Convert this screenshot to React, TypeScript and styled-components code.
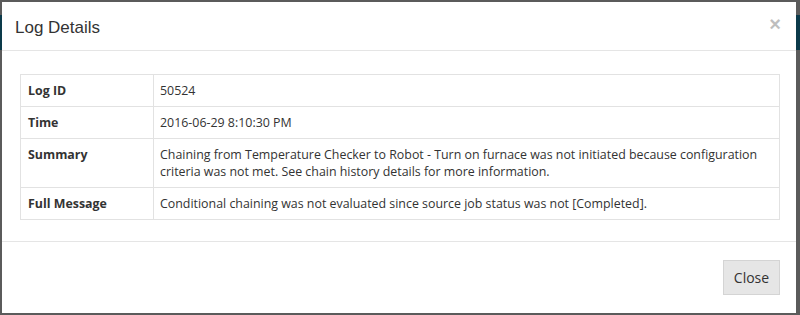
import { createGlobalStyle, styled } from 'styled-components';

const GlobalStyle = createGlobalStyle`
  html, body {
    margin: 0;
    padding: 0;
    background: #5b5b5b;
  }
  * {
    box-sizing: border-box;
  }
`;

interface LogRow {
  label: string;
  value: string;
}

const rows: LogRow[] = [
  { label: 'Log ID', value: '50524' },
  { label: 'Time', value: '2016-06-29 8:10:30 PM' },
  {
    label: 'Summary',
    value:
      'Chaining from Temperature Checker to Robot - Turn on furnace was not initiated because configuration criteria was not met. See chain history details for more information.',
  },
  {
    label: 'Full Message',
    value: 'Conditional chaining was not evaluated since source job status was not [Completed].',
  },
];

const App = () => {
  return (
    <>
      <GlobalStyle />
      <Page>
        <PageHeader />
        <Modal>
          <ModalHeader>
            <ModalTitle>Log Details</ModalTitle>
            <CloseIcon aria-label='close'>×</CloseIcon>
          </ModalHeader>
          <ModalBody>
            <DetailTable>
              <tbody>
                {rows.map((row) => (
                  <tr key={row.label}>
                    <LabelCell>{row.label}</LabelCell>
                    <ValueCell>{row.value}</ValueCell>
                  </tr>
                ))}
              </tbody>
            </DetailTable>
          </ModalBody>
          <ModalFooter>
            <Button type='button'>Close</Button>
          </ModalFooter>
        </Modal>
      </Page>
    </>
  );
};

export default App;

const Page = styled.div`
  position: relative;
  width: 800px;
  height: 315px;
  padding-top: 15px;
  overflow: hidden;
`;

const PageHeader = styled.div`
  height: 35px;
  background: #0c3a4a;
`;

const Modal = styled.div`
  position: absolute;
  top: 2px;
  left: 2px;
  width: 794px;
  height: 311px;
  background: #fff;
  display: flex;
  flex-direction: column;
`;

const ModalHeader = styled.div`
  display: flex;
  align-items: center;
  justify-content: space-between;
  height: 49px;
  padding: 0 15px 0 13px;
  border-bottom: 1px solid #e5e5e5;
`;

const ModalTitle = styled.h4`
  margin: 0;
  font-family: 'Liberation Sans', Arial, sans-serif;
  font-size: 17px;
  font-weight: normal;
  color: #333;
  padding-top: 3px;
`;

const CloseIcon = styled.span`
  font-family: 'Liberation Sans', Arial, sans-serif;
  font-size: 20px;
  font-weight: bold;
  line-height: 1;
  color: #000;
  opacity: 0.25;
  margin-top: -4px;
`;

const ModalBody = styled.div`
  flex: 1;
  padding: 23px 16px 0 18px;
`;

const DetailTable = styled.table`
  width: 100%;
  border-collapse: collapse;
  border: 1px solid #e2e2e2;
  font-family: 'Open Sans', sans-serif;
  font-size: 12.4px;
  line-height: 17px;
  color: #333;
`;

const LabelCell = styled.td`
  width: 133px;
  padding: 7px 7px;
  border: 1px solid #e2e2e2;
  font-weight: bold;
  vertical-align: top;
`;

const ValueCell = styled.td`
  padding: 7px 6px;
  border: 1px solid #e2e2e2;
  vertical-align: top;
`;

const ModalFooter = styled.div`
  display: flex;
  justify-content: flex-end;
  height: 72px;
  padding: 18px 16px 0 0;
  border-top: 1px solid #e5e5e5;
`;

const Button = styled.button`
  width: 57px;
  height: 35px;
  padding: 0;
  background: #e6e6e6;
  border: 1px solid #d4d4d4;
  border-radius: 0;
  font-family: 'Open Sans', sans-serif;
  font-size: 14px;
  color: #333;
`;
